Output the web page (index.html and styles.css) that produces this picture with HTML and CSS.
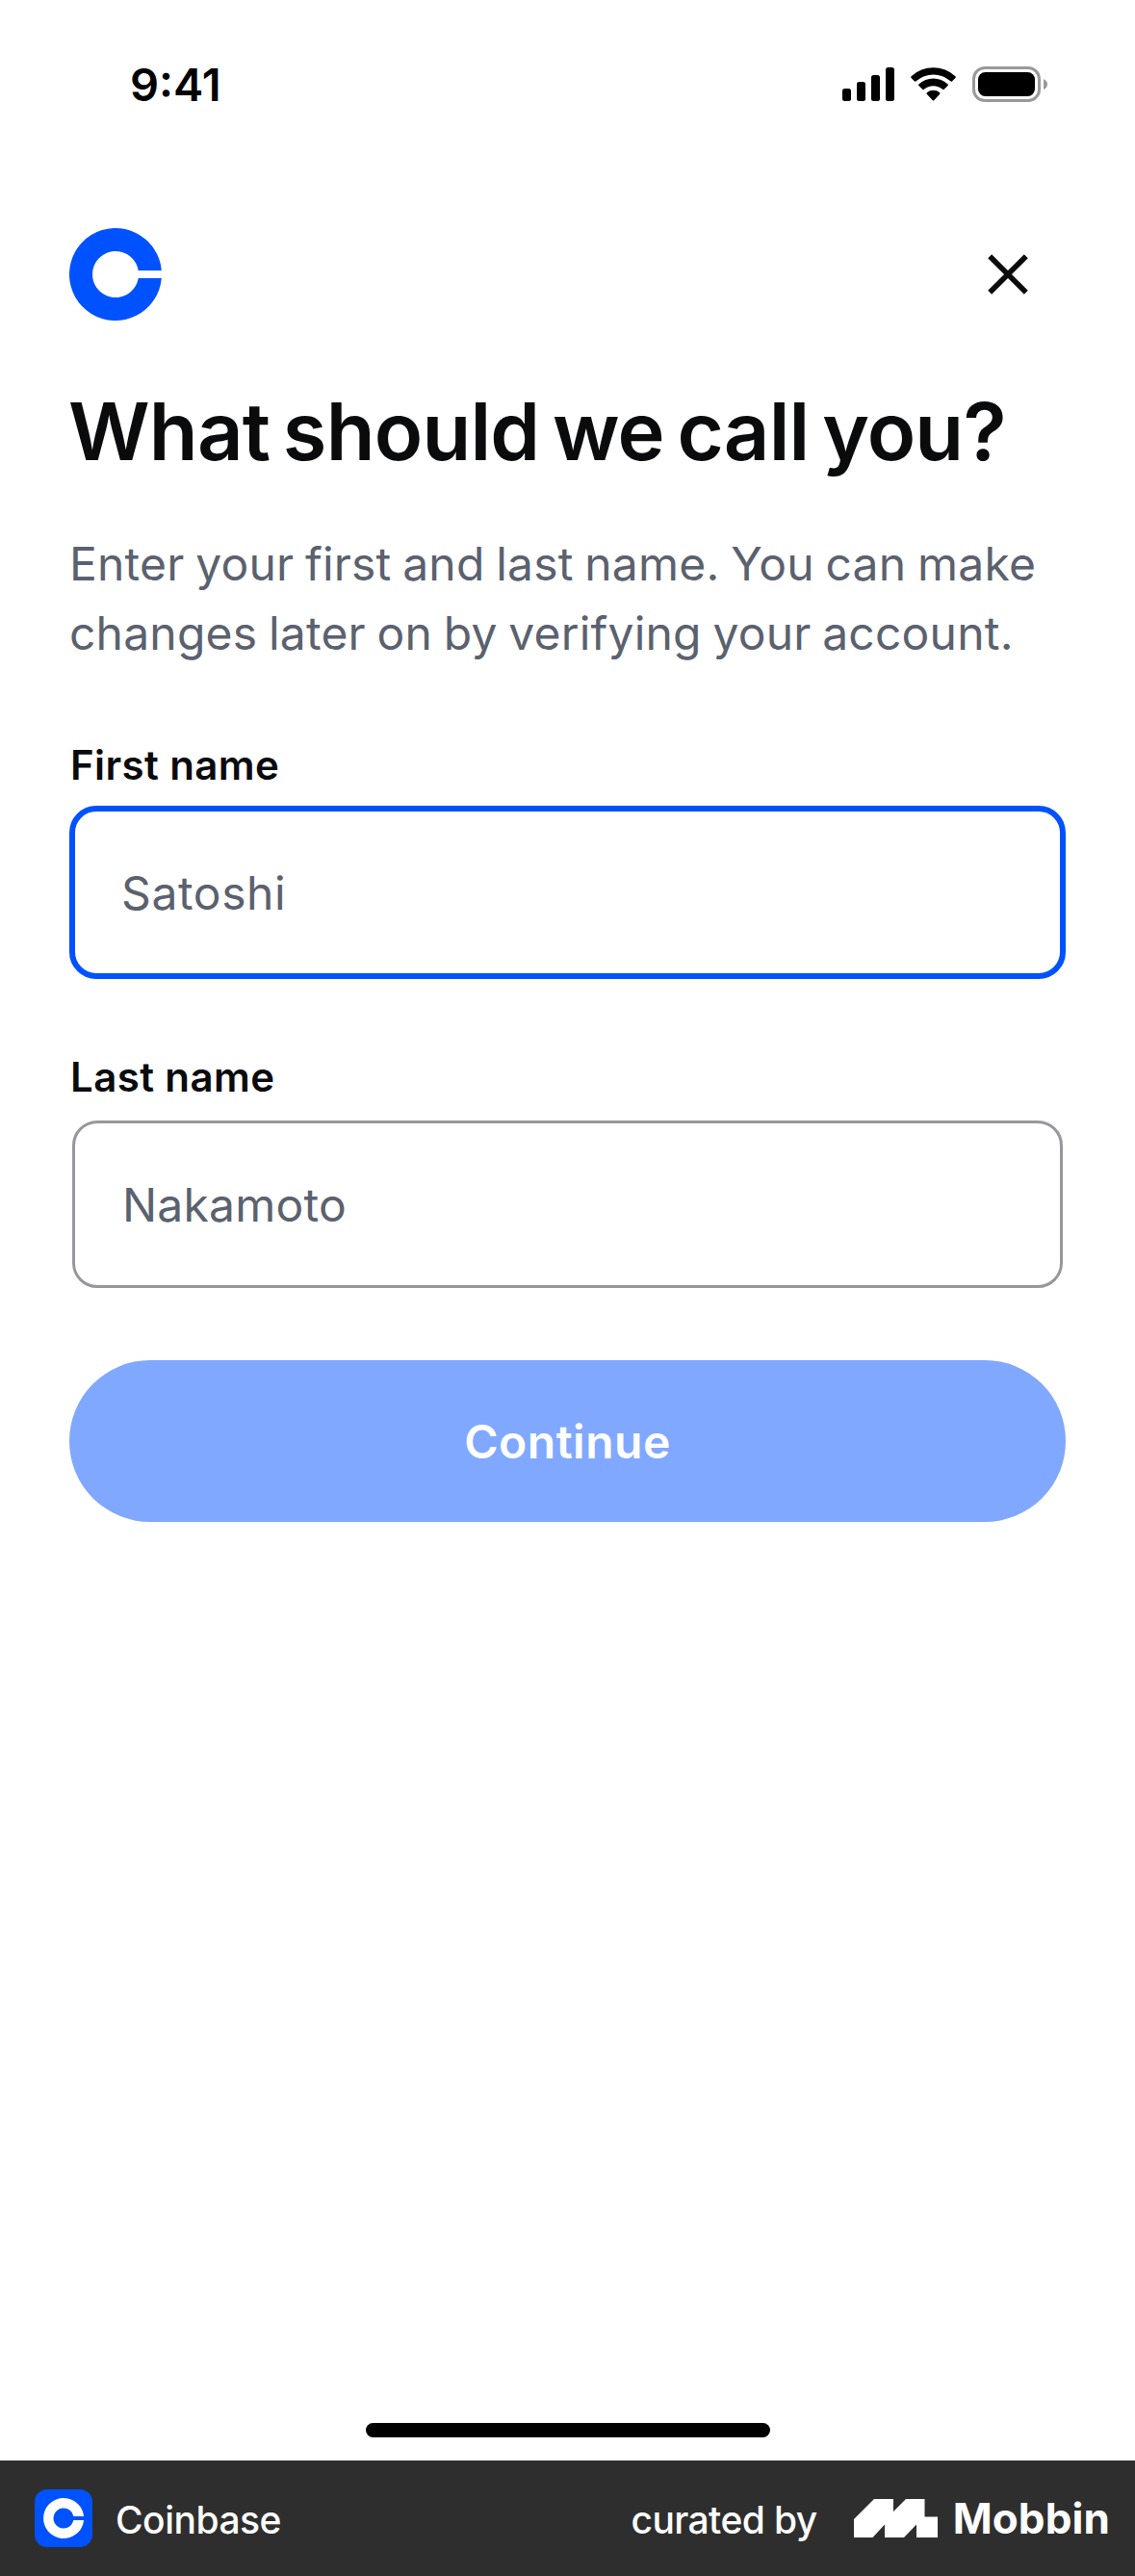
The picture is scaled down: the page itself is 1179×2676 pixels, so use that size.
FILE: index.html
```html
<!DOCTYPE html>
<html lang="en">
<head>
<meta charset="utf-8">
<title>Coinbase</title>
<link rel="stylesheet" href="styles.css">
</head>
<body>
<div class="screen">
  <header class="status">
    <span class="time">9:41</span>
    <svg class="status-icons" width="216" height="40" viewBox="874 68 216 40">
      <rect x="875" y="92" width="9" height="13" rx="2.5"/>
      <rect x="890" y="85" width="9" height="20" rx="2.5"/>
      <rect x="905" y="78" width="9" height="27" rx="2.5"/>
      <rect x="920" y="70" width="9" height="35" rx="2.5"/>
      <path d="M946.6 79.2Q945.8 80 946.6 81L950 84.4Q950.8 85 951.7 84.3A26.5 26.5 0 0 1 987.3 84.3Q988.2 85 989 84.4L992.4 81Q993.2 80 992.4 79.2A33.5 33.5 0 0 0 946.6 79.2Z"/>
      <path d="M954.4 87.4Q953.6 88.2 954.4 89L958.3 92.8Q959 93.5 959.9 92.8A14.5 14.5 0 0 1 979.1 92.8Q980 93.5 980.7 92.8L984.6 89Q985.4 88.2 984.6 87.4A22 22 0 0 0 954.4 87.4Z"/>
      <path d="M962.8 96.2Q962 97 962.8 97.8L968.8 104.2Q969.5 105 970.2 104.2L976.2 97.8Q977 97 976.2 96.2A10.5 10.5 0 0 0 962.8 96.2Z"/>
      <rect x="1011.5" y="70.5" width="68" height="34" rx="11.5" fill="none" stroke="#999" stroke-width="3"/>
      <rect x="1016" y="75" width="59" height="25" rx="7.5"/>
      <path d="M1084 82Q1088 84 1088 87.5T1084 93Z" fill="#999"/>
    </svg>
  </header>
  <main class="content">
    <div class="topbar">
      <svg width="96" height="96" viewBox="0 0 96 96"><path fill="#0052ff" d="M95.8 44H71.7A24 24 0 1 0 71.7 52H95.8A48 48 0 1 1 95.8 44Z"/></svg>
      <svg width="42" height="42" viewBox="0 0 42 42"><path d="M2.2 2.2L39.8 39.8M39.8 2.2L2.2 39.8" stroke="#0a0b0d" stroke-width="5.6"/></svg>
    </div>
    <h1 class="title">What should we call you?</h1>
    <p class="intro">Enter your first and last name. You can make<br>changes later on by verifying your account.</p>
    <div class="field">
      <label class="label" for="first">First name</label>
      <input class="input input-active" id="first" type="text" placeholder="Satoshi">
    </div>
    <div class="field">
      <label class="label label-last" for="last">Last name</label>
      <input class="input" id="last" type="text" placeholder="Nakamoto">
    </div>
    <button class="continue" type="button">Continue</button>
  </main>
  <div class="home"></div>
  <footer class="footer">
    <svg width="60" height="60" viewBox="0 0 60 60"><rect width="60" height="60" rx="13" fill="#0052ff"/><path fill="#fff" d="M51 28H40.3A10.5 10.5 0 1 0 40.3 32H51A21 21 0 1 1 51 28Z"/></svg>
    <span class="app">Coinbase</span>
    <span class="curated">curated by</span>
    <svg class="mobbin-mark" width="87" height="40" viewBox="0 0 87 40"><path fill="#fff" d="M0 21L21 0H41V13L54 0H73.5V18.5H87V40H65V26.5L52 40H32V26.5L19.5 40H0Z"/></svg>
    <span class="mobbin">Mobbin</span>
  </footer>
</div>
</body>
</html>
```
FILE: styles.css
```css
* { box-sizing: border-box; }

body {
  margin: 0;
  background: #fff;
  color: #0a0b0d;
  font-family: Inter, "Liberation Sans", sans-serif;
}

.screen {
  display: flex;
  flex-direction: column;
  width: 1179px;
  height: 2676px;
}

.status {
  display: flex;
  justify-content: space-between;
  height: 237px;
  padding: 68px 89px 0 135px;
  color: #000;
}

.time {
  font-size: 47px;
  font-weight: 600;
  line-height: 40px;
}

.content {
  display: flex;
  flex-direction: column;
  padding: 0 72px;
}

.topbar {
  display: flex;
  align-items: center;
  justify-content: space-between;
  padding-right: 39px;
}

.title {
  margin: 70px 0 0 -1px;
  font-size: 83px;
  font-weight: 600;
  letter-spacing: -0.8px;
  line-height: 90px;
  white-space: nowrap;
  word-spacing: -6.5px;
}

.intro {
  margin: 57px 0 71px;
  color: #5b616e;
  font-size: 48px;
  letter-spacing: 0.2px;
  line-height: 72px;
  white-space: nowrap;
  word-spacing: -2px;
}

.field {
  display: flex;
  flex-direction: column;
  margin-bottom: 72px;
}

.label {
  margin-bottom: 12px;
  padding-left: 1px;
  font-size: 42px;
  font-weight: 600;
  letter-spacing: 0.4px;
  line-height: 60px;
}

.label-last { margin-bottom: 15px; }

.input {
  height: 174px;
  margin: 0 3px 3px;
  padding: 0 49px;
  border: 3px solid #97979f;
  border-radius: 26px;
  outline: none;
  background: #fff;
  font: 48px Inter, "Liberation Sans", sans-serif;
  letter-spacing: 0.2px;
}

.input-active {
  height: 180px;
  margin: 0;
  padding: 0 48px;
  border: 6px solid #0052ff;
  border-radius: 28px;
  letter-spacing: 0.6px;
}

.input::placeholder { color: #5b616e; opacity: 1; }

.continue {
  height: 168px;
  border: 0;
  border-radius: 84px;
  background: #80a8ff;
  color: #fff;
  font: 600 48px Inter, "Liberation Sans", sans-serif;
  letter-spacing: 0.5px;
}

.home {
  width: 420px;
  height: 15px;
  margin: auto auto 24px 380px;
  border-radius: 8px;
  background: #000;
}

.footer {
  display: flex;
  align-items: center;
  height: 120px;
  padding: 0 26px 0 36px;
  background: #2e2e2e;
  color: #fff;
  font-size: 39px;
  font-weight: 500;
}

.app {
  margin-left: 24px;
  padding-top: 3px;
  letter-spacing: -0.5px;
}

.curated {
  margin-left: auto;
  padding-top: 3px;
  letter-spacing: -0.6px;
}

.mobbin-mark { margin: 0 16px 0 38px; }

.mobbin {
  font-size: 44px;
  font-weight: 700;
  letter-spacing: 0.1px;
}
```
